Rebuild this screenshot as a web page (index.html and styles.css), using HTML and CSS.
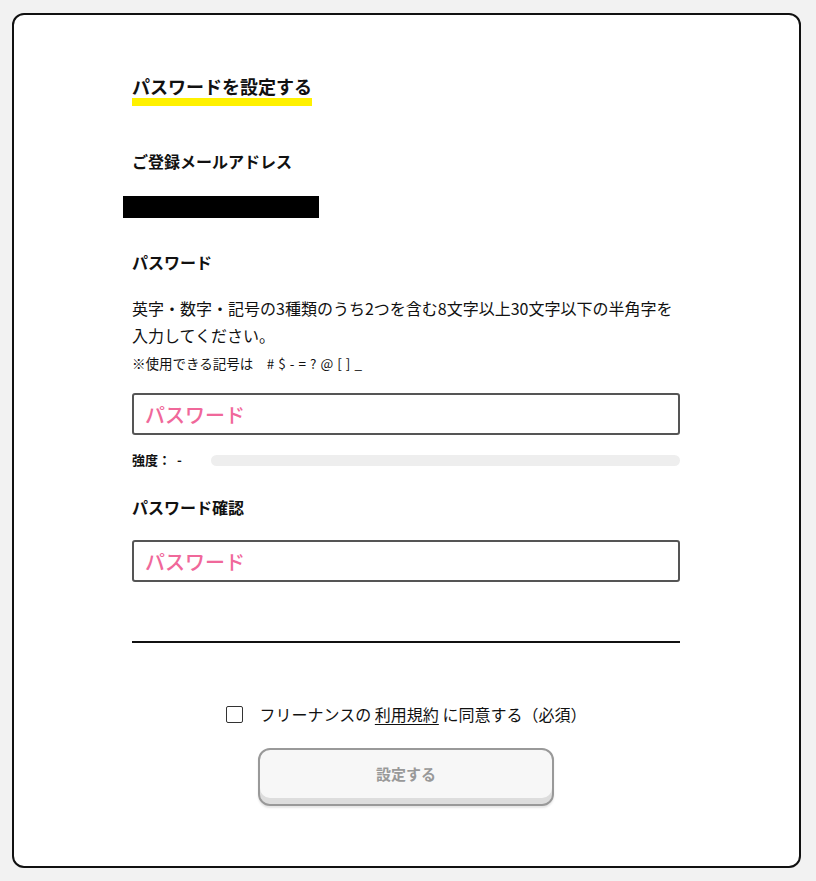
FILE: index.html
```html
<!DOCTYPE html>
<html lang="ja">
<head>
    <meta charset="UTF-8">
    <meta name="viewport" content="width=device-width, initial-scale=1.0">
    <title>パスワードを設定する</title>
    <link rel="stylesheet" href="styles.css">
</head>
<body>
    <div class="card">
        <div class="form">
            <h1 class="title">パスワードを設定する</h1>

            <h2 class="label label-mail">ご登録メールアドレス</h2>
            <div class="mail-mask"></div>

            <h2 class="label label-pass">パスワード</h2>
            <p class="note">英字・数字・記号の3種類のうち2つを含む8文字以上30文字以下の半角字を入力してください。</p>
            <p class="note-small">※使用できる記号は　# $ - = ? @ [ ] _</p>
            <input type="password" class="field" placeholder="パスワード">
            <div class="strength">
                <span class="strength-label">強度： -</span>
                <div class="strength-bar"></div>
            </div>

            <h2 class="label label-confirm">パスワード確認</h2>
            <input type="password" class="field field-confirm" placeholder="パスワード">

            <hr class="divider">

            <label class="agree">
                <input type="checkbox" class="check">
                <span>フリーナンスの <a href="#">利用規約</a> に同意する（必須）</span>
            </label>
            <button class="submit" disabled>設定する</button>
        </div>
    </div>
</body>
</html>
```

FILE: styles.css
```css
body {
    margin: 0;
    padding: 13px 15px 13px 12px;
    background-color: #f2f2f2;
    font-family: "Noto Sans CJK JP", "Noto Sans", sans-serif;
    color: #111;
}
.card {
    box-sizing: border-box;
    height: 855px;
    background-color: #fff;
    border: 2px solid #111;
    border-radius: 12px;
}
.form {
    width: 548px;
    margin-left: 118px;
    padding-top: 59px;
}
.title {
    display: inline-block;
    margin: 0;
    font-size: 18px;
    line-height: 24px;
    font-weight: 700;
    border-bottom: 8px solid #fff100;
}
.label {
    margin: 0;
    font-size: 16px;
    line-height: 24px;
    font-weight: 700;
}
.label-mail {
    margin-top: 43px;
}
.mail-mask {
    width: 196px;
    height: 22px;
    margin: 23px 0 0 -9px;
    background-color: #000;
}
.label-pass {
    margin-top: 32px;
}
.note {
    margin: 21px 0 0;
    font-size: 16px;
    line-height: 27px;
}
.note-small {
    margin: 2px 0 0;
    font-size: 13.5px;
    line-height: 24px;
    word-spacing: 1px;
}
.field {
    display: block;
    box-sizing: border-box;
    width: 100%;
    height: 42px;
    margin: 18px 0 0;
    padding: 0 11px;
    border: 2px solid #555;
    border-radius: 3px;
    font-family: inherit;
    font-size: 20px;
}
.field::placeholder {
    color: #f0689a;
    font-weight: 500;
}
.field-confirm {
    margin-top: 21px;
}
.strength {
    display: flex;
    align-items: center;
    margin-top: 15px;
}
.strength-label {
    width: 79px;
    font-size: 13px;
    font-weight: 700;
    line-height: 20px;
    word-spacing: 3px;
}
.strength-bar {
    flex: 1;
    height: 11px;
    border-radius: 6px;
    background-color: #eee;
}
.label-confirm {
    margin-top: 25px;
}
.divider {
    margin: 59px 0 0;
    border: none;
    border-top: 2px solid #111;
}
.agree {
    display: flex;
    align-items: center;
    justify-content: center;
    gap: 17px;
    margin-top: 59px;
    font-size: 16px;
    line-height: 24px;
}
.agree a {
    color: #111;
    text-decoration: underline;
    text-underline-offset: 3px;
}
.check {
    appearance: none;
    width: 17px;
    height: 17px;
    margin: 0;
    border: 1.5px solid #333;
    border-radius: 2px;
    background: #fff;
}
.submit {
    display: block;
    width: 296px;
    height: 58px;
    margin: 22px auto 0;
    background-color: #f7f7f7;
    border: 2px solid #999;
    border-radius: 12px;
    box-shadow: inset 0 -6px 0 #ddd, 0 2px 2px #e6e6e6;
    color: #999;
    font-family: inherit;
    font-size: 15px;
    font-weight: 700;
    padding-bottom: 8px;
}
```
